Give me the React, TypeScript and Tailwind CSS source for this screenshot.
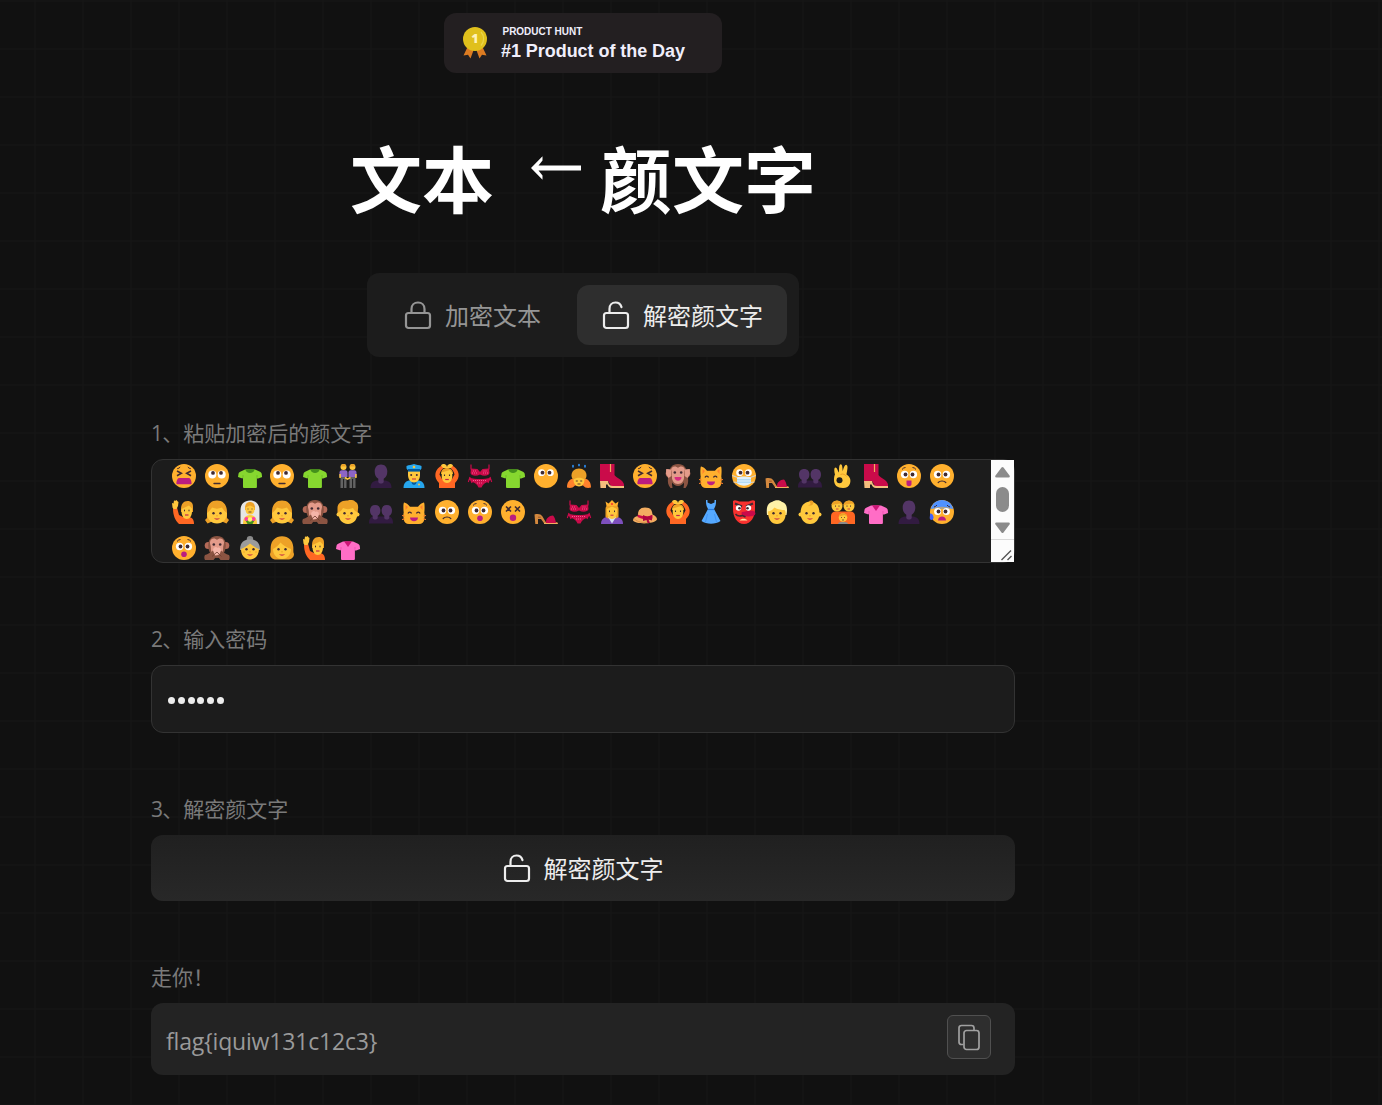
import type { ReactNode } from 'react';

const FACE = '#ffb02e';
const SKIN = '#ffc83d';
const HAIR = '#eda127';
const DARK = '#402a32';

const Face = ({ children }: { children?: ReactNode }) => (
  <>
    <circle cx="12" cy="12" r="12" fill={FACE} />
    {children}
  </>
);

const WideEyes = ({ y = 9, r = 3.4 }: { y?: number; r?: number }) => (
  <>
    <circle cx="7.600" cy={y} r={r} fill="#fff" />
    <circle cx="16.400" cy={y} r={r} fill="#fff" />
    <circle cx="8.500" cy={y} r="1.900" fill={DARK} />
    <circle cx="15.500" cy={y} r="1.900" fill={DARK} />
  </>
);

const SmallFace = () => (
  <>
    <circle cx="8.500" cy="13.200" r="1.200" fill={DARK} />
    <circle cx="15.500" cy="13.200" r="1.200" fill={DARK} />
    <path d="M9.300 18c1.600.8 3.800.8 5.400 0-.5 2.300-4.900 2.300-5.400 0" fill="#c3254a" />
    <path d="M11.300 15.800h1.400" stroke="#e59a1c" strokeWidth=".9" />
  </>
);

const Tee = ({ main, neck, shade }: { main: string; neck: ReactNode; shade: string }) => (
  <>
    <path d="M7 5.500h10l5 2.200c1 .5 1.500 1.200 1.700 2.100l.4 3.200-4.600 1.800-.6-1V23q0 1-1 1H6q-1 0-1-1v-9.500l-.5 1L0 13l.5-3.200C.700 8.800 1.200 8.200 2.200 7.700Z" fill={main} />
    <path d="M5 13.500V11M19 13.500V11" stroke={shade} strokeWidth=".6" />
    {neck}
  </>
);

const Monkey = ({ children }: { children?: ReactNode }) => (
  <>
    <circle cx="3.200" cy="9.500" r="3.500" fill="#b56a58" />
    <circle cx="20.800" cy="9.500" r="3.500" fill="#b56a58" />
    <path d="M12 0c6 0 8.800 4 8.800 9.500S17.500 22 12 22 3.200 15 3.200 9.500 6 0 12 0Z" fill="#8b5442" />
    <path d="M12 4c2-2.500 7-2 7 2.500 0 2-.8 3-.8 5C18.200 17 16 20 12 20s-6.200-3-6.200-8.500c0-2-.8-3-.8-5C5 2 10 1.500 12 4Z" fill="#e39b8a" />
    <circle cx="8.800" cy="8.500" r="1.300" fill={DARK} />
    <circle cx="15.200" cy="8.500" r="1.300" fill={DARK} />
    {children}
  </>
);

const Person = ({ x, arm }: { x: number; arm: string }) => (
  <g transform={`translate(${x} 0)`}>
    <circle cx="4" cy="3" r="3" fill={SKIN} />
    <path d="M1.500 2.400C1.500-.8 6.500-.8 6.500 2.400Z" fill={HAIR} />
    <path d="M2.200 6.200h3.600c1.600 0 2.200 1 2.200 2.500V13H0V8.700c0-1.500.6-2.500 2.200-2.500Z" fill="#8d65c5" />
    <path d="M1 13h6v11H4.600v-9h-1v9H1Z" fill="#636363" />
    <path d={arm} stroke={SKIN} strokeWidth="1.500" fill="none" />
  </g>
);

const art: Record<string, ReactNode> = {
  '😫': (
    <Face>
      <path d="M5 7l4.300 2.300L5 11.700M19 7l-4.300 2.300L19 11.700" stroke={DARK} strokeWidth="1.600" fill="none" />
      <path d="M5.200 4.700q2-.3 3-1.700M18.800 4.700q-2-.3-3-1.700" stroke={DARK} strokeWidth="1" fill="none" />
      <path d="M7 14h10c1.600 0 2.600 3.500 2.600 5.200 0 1-.6 1.300-1.600 1H6c-1 .3-1.600 0-1.600-1C4.400 17.500 5.400 14 7 14Z" fill="#bb1d80" />
    </Face>
  ),
  '🙄': (
    <Face>
      <circle cx="7.300" cy="10.600" r="4" fill="#fff" />
      <circle cx="16.700" cy="10.600" r="4" fill="#fff" />
      <circle cx="8" cy="8.900" r="1.900" fill={DARK} />
      <circle cx="16" cy="8.900" r="1.900" fill={DARK} />
      <path d="M9 19.500h6" stroke={DARK} strokeWidth="1.400" strokeLinecap="round" />
    </Face>
  ),
  '👕': <Tee main="#86d72f" shade="#5fae1c" neck={<path d="M7.500 5.300h9c-.2 5-8.800 5-9 0Z" fill="#44911b" />} />,
  '👚': <Tee main="#ff6dc6" shade="#e645a5" neck={<path d="M8 5.300h8l-4 5.800Z" fill="#cc1676" />} />,
  '👬': (
    <g>
      <Person x={3.5} arm="M.600 10v4" />
      <Person x={12.5} arm="M7.400 10v4" />
      <path d="M9 13.500l2.500 1.600 3-1.600" stroke={SKIN} strokeWidth="1.600" fill="none" />
    </g>
  ),
  '👤': (
    <>
      <path d="M1.500 24c0-5 2.500-7 6.500-7.500h8c4 .5 6.500 2.500 6.500 7.500Z" fill="#321b41" />
      <path d="M12 .500c4 0 6.300 2.800 6.300 7 0 3.400-1.300 6-3.600 7.200V18c-1 2-4.400 2-5.400 0v-3.300C7 13.500 5.700 10.900 5.700 7.500c0-4.200 2.300-7 6.300-7Z" fill="#533566" />
    </>
  ),
  '👥': (
    <>
      <path d="M0 23.500c0-4 1-6.500 4-7h16c3 .5 4 3 4 7Z" fill="#321b41" />
      <path d="M6.200 5c3.300 0 5.200 2.200 5.200 5.500 0 2.700-1 4.300-2.700 5.200v2.500c-.8 1.800-4.200 1.800-5 0v-2.500C2 14.800 1 13.200 1 10.500 1 7.200 2.900 5 6.200 5ZM17.800 5C21.100 5 23 7.200 23 10.500c0 2.700-1 4.300-2.700 5.200v2.500c-.8 1.800-4.200 1.800-5 0v-2.500c-1.700-.9-2.700-2.500-2.700-5.200C12.600 7.200 14.500 5 17.800 5Z" fill="#533566" />
    </>
  ),
  '👮': (
    <>
      <path d="M1.500 24c0-5 2.500-7.500 7-7.500h7c4.500 0 7 2.500 7 7.500Z" fill="#26a6ee" />
      <path d="M9 16h6l-1 4-2 1-2-1Z" fill="#005a9e" />
      <path d="M6 7h12v4c0 4.500-2.500 7.500-6 7.500S6 15.500 6 11Z" fill={SKIN} />
      <circle cx="9.200" cy="11" r="1" fill={DARK} />
      <circle cx="14.800" cy="11" r="1" fill={DARK} />
      <path d="M10 15h4" stroke="#c3254a" strokeWidth="1" />
      <path d="M12 0c2 1 5 .8 7.500 2v2.500L17.500 7h-11l-2-2.500V2C7 .800 10 1 12 0Z" fill="#26a6ee" />
      <path d="M6 5h12v2.600H6Z" fill="#005a9e" />
      <circle cx="12" cy="3" r="1.300" fill="#f9c23c" />
      <circle cx="17" cy="20.500" r="1" fill="#f9c23c" />
    </>
  ),
  '🙆': (
    <>
      <path d="M4 24v-5C1 16 0 13 .400 10 1 6 4 2.500 8 1l2 1.500C7 5 5 7.500 4.500 10.500L7 15l3 1.500h4l3-1.500 2.500-4.500C19 7.500 17 5 14 2.500L16 1c4 1.500 7 5 7.600 9 .4 3-.6 6-3.600 9v5Z" fill="#ff6723" />
      <path d="M6 1.500c1-2 4-2 5.500 0L12 3l.500-1.500c1.500-2 4.500-2 5.500 0L16 4H8Z" fill={SKIN} />
      <path d="M6 10c0-4 2.500-6 6-6s6 2 6 6Z" fill={HAIR} />
      <path d="M6.700 8.500 15 6l2.300 3v3c0 4-2 7-5.300 7s-5.300-3-5.300-7Z" fill={SKIN} />
      <path d="M9.500 10.500v1.600M14.500 10.500v1.600" stroke={DARK} strokeWidth="1.100" />
      <path d="M10.200 15.500h3.600" stroke="#c3254a" strokeWidth="1.200" />
    </>
  ),
  '👙': (
    <>
      <path d="M3 .500v5M21 .500v5" stroke="#ca0b4a" strokeWidth="1.200" />
      <path d="M3 4.500 9.500 5l2.500 3 2.500-3L21 4.500l.5 4.500c-.5 3-6 3.500-9.500 1.500-3.500 2-9 1.500-9.500-1.500Z" fill="#ca0b4a" />
      <path d="M1 13.500c7 2 15 2 22 0l-2.500 4.500C17 18.500 15 20 13.500 23.500h-3C9 20 7 18.500 3.500 18Z" fill="#ca0b4a" />
      <path d="M2 13 .300 18M2 14l2 5M22 13l1.700 5M22 14l-2 5" stroke="#ca0b4a" strokeWidth="1.100" />
      <path d="M5 7h3M4 9h5M15.500 7h3M15 9h5M5 16.500h14M9 19h6" stroke="#ff6fa3" strokeWidth=".8" strokeDasharray="1 1" />
    </>
  ),
  '😶': (
    <Face>
      <WideEyes y={8.7} />
    </Face>
  ),
  '🙇': (
    <>
      <path d="M0 23.500C0 18 2.500 15 7 14.500h10c4.500.5 7 3.500 7 9-3 1-6 .5-8-2H8c-2 2.500-5 3-8 2Z" fill="#ff822d" />
      <path d="M12 4.500c4.500 0 7.500 3 7.500 7 0 2-1 3.500-2.500 4.500H7c-1.500-1-2.500-2.500-2.500-4.500 0-4 3-7 7.500-7Z" fill={HAIR} />
      <path d="M6.500 15.500c3-2.500 8-2.500 11 0 0 4-2.200 7-5.500 7s-5.500-3-5.500-7Z" fill={SKIN} />
      <path d="M8.800 17h2M13.200 17h2M10.500 20h3" stroke={DARK} strokeWidth=".9" />
      <path d="M6 1.500v1.300M12 .500v1M18 1.500v1.300" stroke="#2d8df0" strokeWidth="1.700" strokeLinecap="round" />
    </>
  ),
  '👢': (
    <>
      <path d="M0 0h14.500v11c1.500 3 8.500 4.500 9.500 9.500v1.500H11L8 17H0Z" fill="#ca0b4a" />
      <path d="M10.500 0v8" stroke="#f3ad61" strokeWidth="1.200" />
      <path d="M0 17H8c.5 3.500 2 5 5 5h11v2H12c-2.500 0-3.500-1.500-4.500-3.500H6V24H.500Z" fill="#f4bd7d" />
    </>
  ),
  '🙉': (
    <Monkey>
      <path d="M8.500 13h7c0 5-7 5-7 0Z" fill="#d82d7e" />
      <path d="M4.500 24C2 21 1.500 18 2 14L0 10V6l1.500-1 4 1.500.5 6v8L6.500 24ZM19.500 24c2.500-3 3-6 2.500-10l2-4V6l-1.500-1-4 1.500-.5 6v8l-.5 3.500Z" fill="#8b5442" />
      <path d="M.200 5 5.200 5.500 5.500 12 2.500 14 0 10ZM23.800 5l-5 .5-.3 6.500 3 2 2.500-4Z" fill="#e39b8a" />
    </Monkey>
  ),
  '😸': (
    <>
      <path d="M2 2.500c1-.4 4.500 2 6 4.300h8c1.500-2.300 5-4.700 6-4.300.8 1 .7 7 .3 10 .6 2.500.3 4 0 6.500-.3 3.500-2.300 5-5.300 5H7c-3 0-5-1.500-5.300-5-.3-2.500-.6-4 0-6.500-.4-3-.5-9 .3-10Z" fill={FACE} />
      <path d="M3.500 5l2.500 2-2.500 3ZM20.500 5 18 7l2.500 3Z" fill="#ff822d" />
      <path d="M6 13.500c.5-1.800 3-1.800 3.500 0M14.500 13.500c.5-1.800 3-1.800 3.500 0" stroke={DARK} strokeWidth="1.300" fill="none" />
      <path d="M8 17.500h8c0 5-8 5-8 0Z" fill="#bb1d80" />
      <path d="M0 15.500l3 .7M0 19.500l3-.7M24 15.500l-3 .7M24 19.500l-3-.7" stroke="#ff822d" strokeWidth="1" />
    </>
  ),
  '😷': (
    <Face>
      <WideEyes y={8.7} />
      <path d="M.300 11.500 5.500 13.500h13l5.200-2M1.500 18l4 .5M22.500 18l-4 .5" stroke="#d3d3d3" strokeWidth="1.100" fill="none" />
      <path d="M5 13.500c4-1.300 10-1.300 14 0v5.700c-3.500 3.300-10.500 3.300-14 0Z" fill="#e1f0fa" />
      <path d="M5 15.800h14M5 18.200h14" stroke="#8fcaf0" strokeWidth=".8" />
    </Face>
  ),
  '👡': (
    <>
      <path d="M.500 14.500c3.500-1 6.500-.4 8 2l3.200 5.500H22c1.500 0 2 .7 2 2H12c-1.200 0-1.800-.5-2.500-1.500L7 19H4v5H1.300Z" fill="#d3883e" />
      <path d="M4 17.200h2.800" stroke="#8b4a24" strokeWidth=".8" />
      <path d="M12 21.500c.3-3.300 2.800-5.800 7-6.100 1.500 1.500 2.500 4.100 3 7.600H12Z" fill="#ca0b4a" />
      <path d="M10 23.500h13.500" stroke="#f3ad61" strokeWidth="1" />
    </>
  ),
  '👌': (
    <>
      <path d="M4 10.500C3 7 3 3.500 4.500 3.500c1.500 0 2 3 3.500 5C8 4 8 .500 9.800.300c1.700 0 1.600 4 2 7C12.700 4 13.700.500 15.500.900c2 .5.500 6 0 9.600 4 2.500 4.500 6 3.500 9-1 3-3.500 4.500-7 4.500-6 0-9-3-9-8 0-3 .5-4.500 1-5.500Z" fill={SKIN} />
      <path d="M9.500 10.500c2.500-1.300 5 .3 6 2" stroke={HAIR} strokeWidth="1" fill="none" />
      <circle cx="8.500" cy="16.300" r="3" fill="#1c1c1c" />
    </>
  ),
  '😲': (
    <Face>
      <WideEyes y={10.5} r={3.7} />
      <path d="M5 5.500q1.500-2 3.500-2M19 5.500q-1.500-2-3.500-2" stroke={DARK} strokeWidth="1" fill="none" />
      <path d="M9.500 16.500h5V20c0 3-5 3-5 0Z" fill="#bb1d80" />
    </Face>
  ),
  '🙁': (
    <Face>
      <WideEyes y={10.5} r={3.7} />
      <path d="M8.200 18.500c1.800-2 5.800-2 7.600 0" stroke={DARK} strokeWidth="1.200" fill="none" strokeLinecap="round" />
    </Face>
  ),
  '😯': (
    <Face>
      <WideEyes y={10.5} r={3.7} />
      <path d="M5 5.500q1.500-2 3.500-2M19 5.500q-1.500-2-3.500-2" stroke={DARK} strokeWidth="1" fill="none" />
      <circle cx="12" cy="18.300" r="2.800" fill="#bb1d80" />
    </Face>
  ),
  '😵': (
    <Face>
      <path d="M5 6.500l5 5M10 6.500l-5 5M14 6.500l5 5M19 6.500l-5 5" stroke={DARK} strokeWidth="1.600" />
      <circle cx="12" cy="17.700" r="3.200" fill="#bb1d80" />
    </Face>
  ),
  '😰': (
    <Face>
      <path d="M.800 9C2 3.500 6.500 0 12 0s10 3.500 11.200 9Z" fill="#5092ff" />
      <path d="M1 9C8 6 16 6 23 9v2H1Z" fill={FACE} opacity=".55" />
      <WideEyes y={11.5} r={3.5} />
      <path d="M4 7q2-.5 3-2M20 7q-2-.5-3-2" stroke={DARK} strokeWidth="1" fill="none" />
      <path d="M8 20.500c0-5.500 8-5.500 8 0Z" fill="#bb1d80" />
      <path d="M.200 13.500c1-.5 3.300 1 3.300 3.800 0 3.500-3.800 3.500-3.800.5Z" fill="#3f5fff" />
    </Face>
  ),
  '🙋': (
    <>
      <path d="M1 8.500 5 7.500 7 15l4 2h5c4 0 6 2.500 6 7H7C3 20.500 1 15 1 8.500Z" fill="#ff6723" />
      <path d="M.500 7.500 0 3l1.500.5L2 .500l1.500.3 1-.8 1 1.200 1 .8L6 6l-1.500 3H1.500Z" fill={SKIN} />
      <path d="M9 9c0-5 2.500-8 6.500-8s5.500 2.500 5.500 6v5H9Z" fill={HAIR} />
      <path d="M9.500 9 17 5.500l3 3V11c0 4.500-2 8-5.200 8S9.500 15.500 9.500 11Z" fill={SKIN} />
      <path d="M12.500 9.700v1.600M17 9.700v1.600" stroke={DARK} strokeWidth="1" />
      <path d="M13 15h3.500" stroke="#c3254a" strokeWidth="1.200" />
    </>
  ),
  '👧': (
    <>
      <path d="M2 12C2 4.500 6 .500 12 .500S22 4.500 22 12v6l2 2-2.500 3.500-4.500-2H7l-4.500 2L0 20l2-2Z" fill={HAIR} />
      <path d="M2 13c2-1.500 4-3.500 5-5.500 3.500 1.500 6.500 1.500 10 0 1 2 3 4 5 5.500 0 6-4 10.500-10 10.500S2 19 2 13Z" fill={SKIN} />
      <SmallFace />
    </>
  ),
  '👰': (
    <>
      <path d="M2.500 24V10C2.500 4 6.500.500 12 .500S21.500 4 21.500 10v14Z" fill="#e6e6e6" />
      <path d="M7 8c0-4 2-6 5-6s5 2 5 6v2H7Z" fill={HAIR} />
      <path d="M7.500 7.500 12 5.500l4.500 2v2c0 3-1.500 5-4.500 5s-4.500-2-4.500-5Z" fill={SKIN} />
      <path d="M10 8.500v1M14 8.500v1M10.500 12h3" stroke={DARK} strokeWidth=".8" />
      <path d="M5 24c0-6 2-8.500 7-9 5 .5 7 3 7 9Z" fill={SKIN} />
      <path d="M7 19.500h10L14.500 24h-5Z" fill="#44911b" />
      <circle cx="8.500" cy="19" r="2" fill="#ff3da5" />
      <circle cx="15.500" cy="19" r="2" fill="#ff3da5" />
      <circle cx="12" cy="19.500" r="2.200" fill="#fff478" />
    </>
  ),
  '🙊': (
    <Monkey>
      <path d="M0 19c3-1 6-2.500 8.500-5l4 5-4 5H0c-1-1.500-.8-4 0-5ZM24 19c-3-1-6-2.500-8.500-5l-4 5 4 5H24c1-1.500.8-4 0-5Z" fill="#8b5442" />
      <path d="M8 14.500c0-3 3-4.500 4.500-2.500 1.800-1.200 3.500.5 3.500 2.500l-1.500 4-4.500 1Z" fill="#f5b5a8" />
      <path d="M7 20.500 12 16l4.500 4.500" stroke="#6d3b2d" strokeWidth=".8" fill="none" />
    </Monkey>
  ),
  '👦': (
    <>
      <path d="M1.500 14V8c0-4.500 4-8 10.500-7.500 2-.8 6-.3 7 1 3 1 3.500 5 3 7.500L21.500 14Z" fill={HAIR} />
      <circle cx="2.500" cy="14.500" r="2" fill={SKIN} />
      <circle cx="21.500" cy="14.500" r="2" fill={SKIN} />
      <path d="M2.500 12c2.500-.5 3.500-2.500 4.500-4 3 1.500 7 1.500 10 0 1 1.500 2 3.500 4.500 4 .5 7-3.500 12-9.500 12S2 19 2.500 12Z" fill={SKIN} />
      <SmallFace />
    </>
  ),
  '👸': (
    <>
      <path d="M1 24c0-4 2-6.500 6-7h10c4 .5 6 3 6 7Z" fill="#7d4fbd" />
      <path d="M5.500 9c0-3.500 3-5 6.500-5s6.500 1.500 6.500 5v8L16 18.500H8L5.500 17Z" fill={HAIR} />
      <path d="M8 17h8l-4 6.500Z" fill="#d4e0f5" />
      <path d="M7 9l5-2.500L17 9v3c0 4-2 7-5 7s-5-3-5-7Z" fill={SKIN} />
      <path d="M9.500 10.500v1.600M14.500 10.500v1.600" stroke={DARK} strokeWidth="1" />
      <path d="M10.500 15.200h3" stroke="#c3254a" strokeWidth="1" />
      <path d="M5.500 1.500 8.500 3.500 12 0l3.500 3.500 3-2L17.500 6h-11Z" fill="#ffb02e" />
      <circle cx="12" cy="4" r="1" fill="#f8312f" />
    </>
  ),
  '👒': (
    <>
      <path d="M5 16C4.500 10 7.500 7.500 12 7.500S19 9 19.500 14.500c3 1 4.500 3 4.500 5-3 5-21 5-24 1 0-2.500 2-4 5-4.500Z" fill="#f3ad61" />
      <path d="M4.800 14.500c4 2 10 2.500 14.700.5v3.500c-5 1.500-10 1-15-1.500Z" fill="#ca0b4a" />
      <path d="M1 18.500c4 4 9 4.500 13 3.500" stroke="#d99049" strokeWidth="1" fill="none" />
      <path d="M10 15l4.500 2L19 15v5.500L15.500 19.500 17 23h-2.500L13.500 20 10 21Z" fill="#b00640" />
    </>
  ),
  '👗': (
    <>
      <path d="M7 0v2c0 3 1 5 2 7L2.500 21c5 3.500 14 3.500 19 0L15 9c1-2 2-4 2-7V0h-1.500v2.500L12 4 8.500 2.500V0Z" fill="#55a9ff" />
      <path d="M9 9.500h6" stroke="#2478dd" strokeWidth="1.200" />
      <path d="M8.500 14l-2 8M15.500 14l2 8" stroke="#3d8ef0" strokeWidth=".8" />
    </>
  ),
  '👺': (
    <>
      <path d="M1 1c2-1.500 4.500 0 6 .5h10c1.500-.5 4-2 6-.5v8c0 8-4 15-11 15S1 17 1 9Z" fill="#f8312f" />
      <path d="M3 3.500 10 6.500M21 3.500 14 6.500" stroke={DARK} strokeWidth="2" />
      <circle cx="6.500" cy="8" r="2.700" fill="#fff" />
      <circle cx="16.500" cy="8" r="2.700" fill="#fff" />
      <circle cx="7.500" cy="8.200" r="1.300" fill={DARK} />
      <circle cx="15.500" cy="8.200" r="1.300" fill={DARK} />
      <path d="M10 12c3 0 6-1.500 10-1.200 4 .2 4.500 4 1.500 5-4 1-7.500.7-10.500-.3-1.500-.7-2-3-1-3.500Z" fill="#ca0b4a" />
      <path d="M3.500 14c1.500 2 4 2.500 7 1.500l3 1.500" stroke={DARK} strokeWidth="1.600" fill="none" />
      <path d="M7.500 20.500c2-2.500 6-2.500 8 0Z" fill="#ffe7a0" />
    </>
  ),
  '👱': (
    <>
      <path d="M2 15C1 7 3 3 7 2c3-2.500 8-2.500 10 0 4 1 6 5 4.500 13Z" fill="#fff2a8" />
      <path d="M3 11.500c3-.5 5-2 6.500-4 3 2 7 2.500 10 2.500.8 1 1.200 2 1.200 3.500 0 6-3.200 10.500-8.700 10.500S3 19.500 3 11.500Z" fill={SKIN} />
      <SmallFace />
    </>
  ),
  '👶': (
    <>
      <circle cx="2.500" cy="14.500" r="2" fill={SKIN} />
      <circle cx="21.500" cy="14.500" r="2" fill={SKIN} />
      <path d="M12 1.500c6 0 9.500 5 9.500 11.500 0 6-3.500 11-9.500 11S2.500 19 2.500 13C2.500 6.500 6 1.500 12 1.500Z" fill={SKIN} />
      <path d="M11 1c3-1.500 5.500.5 4 3-1 1.700-3.500 2-5 1 2.300.3 3.300-1.200 2.200-2" fill={HAIR} />
      <SmallFace />
    </>
  ),
  '👪': (
    <>
      <path d="M0 24v-8c0-3 2-4.500 4.500-4.500h15c2.500 0 4.500 1.500 4.500 4.500v8Z" fill="#ff6723" />
      {[6, 18].map((cx) => (
        <g key={cx}>
          <circle cx={cx} cy="6" r="5.500" fill={SKIN} />
          <path d={cx === 6 ? 'M.500 5C1-.8 11-.8 11.500 5L9 3.500Z' : 'M12.500 5C13-.8 23-.8 23.500 5L21 3.500Z'} fill={HAIR} />
        </g>
      ))}
      <path d="M4.500 5.500v1.200M8 5.500v1.200M16 5.500v1.200M19.500 5.500v1.200" stroke={DARK} strokeWidth=".9" />
      <path d="M5 9h2.500M16.500 9H19" stroke="#c3254a" strokeWidth=".8" />
      <path d="M7 24c0-3 10-3 10 0Z" fill="#8a8a8a" />
      <circle cx="12" cy="17.500" r="4.300" fill={SKIN} />
      <path d="M8 16.500c.5-4.500 7.500-4.500 8 0L13.500 15Z" fill={HAIR} />
      <path d="M10.500 17v1M13.500 17v1M11 20h2" stroke={DARK} strokeWidth=".7" />
    </>
  ),
  '👵': (
    <>
      <circle cx="12" cy="3.200" r="3.200" fill="#8a8a8a" />
      <path d="M2 14C2 6 6 3.500 12 3.500S22 6 22 14Z" fill="#9b9b9b" />
      <path d="M3 13c3-1 6-3 9-5.500 3 2.500 6 4.500 9 5.500 0 6-3.500 10.500-9 10.500S3 19 3 13Z" fill={SKIN} />
      <path d="M5 16h2M17 16h2" stroke={HAIR} strokeWidth=".8" />
      <SmallFace />
    </>
  ),
  '👩': (
    <>
      <path d="M0 18C1 16 .500 14 .700 11 1.200 4.500 5.500.200 12 .200S22.800 4.500 23.300 11c.2 3-.3 5 .7 7 0 4-4 6-7 5.500H7C4 24 0 22 0 18Z" fill={HAIR} />
      <path d="M3 13C6 11.500 8.500 9.500 10.500 6.500 13 9.500 17 11.500 21 13c0 5.500-3.500 10-9 10s-9-4.500-9-10Z" fill={SKIN} />
      <SmallFace />
    </>
  ),
};

const rows = [
  ['😫', '🙄', '👕', '🙄', '👕', '👬', '👤', '👮', '🙆', '👙', '👕', '😶', '🙇', '👢', '😫', '🙉', '😸', '😷', '👡', '👥', '👌', '👢', '😲', '🙁'],
  ['🙋', '👧', '👰', '👧', '🙊', '👦', '👥', '😸', '🙁', '😯', '😵', '👡', '👙', '👸', '👒', '🙆', '👗', '👺', '👱', '👶', '👪', '👚', '👤', '😰'],
  ['😯', '🙊', '👵', '👩', '🙋', '👚'],
];

const Emoji = ({ char }: { char: string }) => (
  <svg role="img" aria-label={char} viewBox="0 0 24 24" className="size-6 shrink-0 overflow-visible">
    {art[char]}
  </svg>
);

const Lock = ({ open = false }: { open?: boolean }) => (
  <svg viewBox="0 0 28 30" className="h-[30px] w-7 shrink-0" fill="none" stroke="currentColor" strokeWidth="2.200" strokeLinecap="round">
    <rect x="2" y="13" width="24" height="15" rx="2.500" />
    {open ? <path d="M7.500 12.500V8.700C7.500 5 10 2.500 13.500 2.500c3 0 5.200 1.700 6 4.600" /> : <path d="M7.500 12.500V9c0-3.900 2.800-6.500 6.500-6.500s6.500 2.600 6.500 6.500v3.500" />}
  </svg>
);

const Medal = () => (
  <svg viewBox="0 0 26 34" className="h-[34px] w-[26px]">
    <path d="M6 20 1.500 29.500l4.500-.7 2.500 3.700L12 23h2l3.500 9.500L20 28.800l4.500.7L20 20Z" fill="#dc7b22" />
    <circle cx="13" cy="13" r="12" fill="#e0c01c" />
    <path d="M19 6c3.500 4 3.500 9.500 0 13.500" stroke="#ead44c" strokeWidth="1.200" fill="none" />
    <text x="13" y="17.300" textAnchor="middle" fontFamily="Open Sans, sans-serif" fontSize="12.500" fontWeight="800" fill="#fff3b8">1</text>
  </svg>
);

const Label = ({ children }: { children: ReactNode }) => (
  <div className="mb-[11px] h-[30px] text-[21px] leading-[30px] whitespace-nowrap text-[#7a7a7a]">{children}</div>
);

const Step = ({ n, children }: { n: number; children: ReactNode }) => (
  <Label>
    <span className="tracking-[-0.700px]">{n}</span>
    {children}
  </Label>
);

const Scrollbar = () => (
  <div className="flex h-[102px] w-[23px] flex-col bg-[#fcfcfc]">
    <div className="flex h-[79px] flex-col items-center pt-[7px]">
      <svg viewBox="0 0 15 11" className="h-[11px] w-[15px]" fill="#8b8b8b">
        <path d="M6.500.500Q7.500-.5 8.500.500L14.500 8.500Q15.500 10.500 13.500 10.500H1.500Q-.5 10.500.500 8.500Z" />
      </svg>
      <div className="mt-[9px] h-[25px] w-[13px] rounded-full bg-[#8b8b8b]" />
      <svg viewBox="0 0 15 11" className="mt-[10px] h-[11px] w-[15px]" fill="#8b8b8b">
        <path d="M6.500 10.500Q7.500 11.500 8.500 10.500L14.500 2.500Q15.500.500 13.500.500H1.500Q-.5.500.500 2.500Z" />
      </svg>
    </div>
    <div className="flex flex-1 items-end justify-end border-t border-[#d9d9d9] pr-[2px] pb-[1px]">
      <svg viewBox="0 0 11 12" className="h-3 w-[11px]" stroke="#555" strokeWidth="1.400">
        <path d="M.500 11 10 1.500M6.500 11 10.500 7" />
      </svg>
    </div>
  </div>
);

export default function App() {
  return (
    <div className="min-h-[1105px] w-full overflow-hidden bg-[#111111] bg-[linear-gradient(to_right,#161616_1.500px,transparent_1.500px),linear-gradient(to_bottom,#161616_1.500px,transparent_1.500px)] bg-[size:48px_48px] bg-[position:34.500px_0.500px] font-['Open_Sans','Noto_Sans_CJK_SC',sans-serif]">
      <main className="flex h-[1105px] w-[1166px] flex-col items-center pt-[13px]">
        <div className="flex h-[60px] w-[278px] rounded-xl bg-[#231f21] pl-[17.500px] font-['Liberation_Sans',sans-serif] font-bold text-[#f0eefb]">
          <div className="mt-[13px]">
            <Medal />
          </div>
          <div className="ml-[13.500px] pt-[13px] whitespace-nowrap">
            <div className="ml-[1.500px] text-[10px] leading-[12px] tracking-[-0.020px]">PRODUCT HUNT</div>
            <div className="text-[18px] leading-[27px] tracking-[-0.050px]">#1 Product of the Day</div>
          </div>
        </div>

        <h1 className="mt-[51px] flex h-[104px] items-center font-['Noto_Sans_CJK_SC',sans-serif] text-[72px] leading-[104px] font-bold text-white">
          <span>文本</span>
          <svg role="img" aria-label="←" viewBox="0 0 50 24" className="mr-[19px] mb-[16px] ml-[37px] h-6 w-[50px]" fill="#fff">
            <path d="M0 12 11.500.300V4.500L7.500 9.500H50v5H7.500L11.500 19.500v4.200Z" />
          </svg>
          <span>颜文字</span>
        </h1>

        <div className="mt-[45px] flex h-[84px] w-[432px] items-center rounded-xl bg-[#1c1c1c] p-3 text-2xl">
          <button className="flex h-[60px] w-[198px] items-center gap-[13px] pl-[25px] text-[#959595]">
            <Lock />
            <span className="mt-[2px] whitespace-nowrap">加密文本</span>
          </button>
          <button className="flex h-[60px] w-[210px] items-center gap-[13px] rounded-xl bg-[#2e2e2e] pl-[25px] text-[#ededed]">
            <Lock open />
            <span className="mt-[2px] whitespace-nowrap">解密颜文字</span>
          </button>
        </div>

        <div className="mt-[61px] flex w-[864px] flex-col">
          <Step n={1}>、粘贴加密后的颜文字</Step>
          <div className="flex h-[104px] justify-between rounded-xl border border-[#333333] bg-[#1c1c1c]">
            <div className="flex flex-col gap-3 pt-[4px] pl-[19.600px]">
              {rows.map((row, i) => (
                <div key={i} className="flex h-6 gap-[8.960px]">
                  {row.map((c, j) => (
                    <Emoji key={j} char={c} />
                  ))}
                </div>
              ))}
            </div>
            <Scrollbar />
          </div>

          <div className="mt-[61px]">
            <Step n={2}>、输入密码</Step>
            <div className="flex h-[68px] items-center gap-[2.800px] rounded-xl border border-[#333333] bg-[#1c1c1c] pt-[3px] pl-4">
              {Array.from({ length: 6 }, (_, i) => (
                <span key={i} className="size-[7px] rounded-full bg-[#ededed]" />
              ))}
            </div>
          </div>

          <div className="mt-[61px]">
            <Step n={3}>、解密颜文字</Step>
            <button className="flex h-[66px] w-full items-center justify-center gap-[13px] rounded-xl bg-linear-to-b from-[#202020] to-[#282828] text-2xl text-[#ededed]">
              <Lock open />
              <span className="mt-[2px] whitespace-nowrap">解密颜文字</span>
            </button>
          </div>

          <div className="mt-[61px]">
            <Label>走你！</Label>
            <div className="flex h-[72px] items-center justify-between rounded-xl bg-[#232323] pr-6 pl-[15px]">
              <span className="pt-[3px] text-[23px] leading-8 tracking-[-0.180px] text-[#9a9a9a]">{'flag{iquiw131c12c3}'}</span>
              <button className="mb-1 flex size-11 items-center justify-center rounded-md border border-[#505050] bg-[#2e2e2e] text-[#a0a0a0]">
                <svg viewBox="0 0 24 28" className="h-7 w-6" fill="none" stroke="currentColor" strokeWidth="1.700">
                  <path d="M6.500 21.500H4.500Q2 21.500 2 19V5Q2 2.500 4.500 2.500H14.500Q17 2.500 17 5V7" />
                  <rect x="7" y="7.500" width="15" height="19" rx="2.500" />
                </svg>
              </button>
            </div>
          </div>
        </div>
      </main>
    </div>
  );
}
